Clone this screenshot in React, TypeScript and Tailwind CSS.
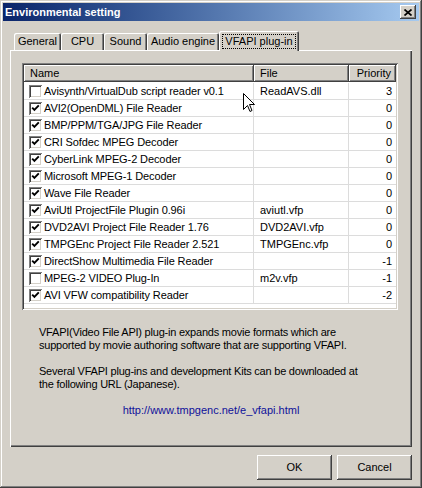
import React from 'react';

// --- Data ---
type Plugin = { name: string; file: string; priority: number; enabled: boolean };

const PLUGINS: Plugin[] = [
  { name: 'Avisynth/VirtualDub script reader v0.1', file: 'ReadAVS.dll', priority: 3, enabled: false },
  { name: 'AVI2(OpenDML) File Reader', file: '', priority: 0, enabled: true },
  { name: 'BMP/PPM/TGA/JPG File Reader', file: '', priority: 0, enabled: true },
  { name: 'CRI Sofdec MPEG Decoder', file: '', priority: 0, enabled: true },
  { name: 'CyberLink MPEG-2 Decoder', file: '', priority: 0, enabled: true },
  { name: 'Microsoft MPEG-1 Decoder', file: '', priority: 0, enabled: true },
  { name: 'Wave File Reader', file: '', priority: 0, enabled: true },
  { name: 'AviUtl ProjectFile Plugin 0.96i', file: 'aviutl.vfp', priority: 0, enabled: true },
  { name: 'DVD2AVI Project File Reader 1.76', file: 'DVD2AVI.vfp', priority: 0, enabled: true },
  { name: 'TMPGEnc Project File Reader 2.521', file: 'TMPGEnc.vfp', priority: 0, enabled: true },
  { name: 'DirectShow Multimedia File Reader', file: '', priority: -1, enabled: true },
  { name: 'MPEG-2 VIDEO Plug-In', file: 'm2v.vfp', priority: -1, enabled: false },
  { name: 'AVI VFW compatibility Reader', file: '', priority: -2, enabled: true },
];

const TABS = [
  { label: 'General', w: 'w-[47px]' },
  { label: 'CPU', w: 'w-[43px]' },
  { label: 'Sound', w: 'w-[43px]' },
  { label: 'Audio engine', w: 'w-[72px]' },
];

// classic win2k bevels
const raised = 'shadow-[inset_-1px_-1px_0_#404040,inset_1px_1px_0_#ffffff,inset_-2px_-2px_0_#808080]';
const sunken = 'shadow-[inset_1px_1px_0_#808080,inset_-1px_-1px_0_#ffffff,inset_2px_2px_0_#404040,inset_-2px_-2px_0_#d4d0c8]';

const CheckBox = ({ checked }: { checked: boolean }) => (
  <div className={`w-[13px] h-[13px] bg-white flex items-center justify-center shrink-0 ${sunken}`}>
    {checked && (
      <svg width="9" height="9" viewBox="0 0 9 9">
        <path d="M1.2 3.6 L3.4 5.9 L7.8 1.4" fill="none" stroke="#000" strokeWidth="1.9" />
      </svg>
    )}
  </div>
);

const Button = ({ label }: { label: string }) => (
  <button className={`w-[75px] h-[25px] bg-[#d4d0c8] text-[11px] text-black ${raised}`}>{label}</button>
);

export default function App() {
  return (
    <div className="w-[422px] h-[488px] bg-[#d4d0c8] p-[3px] flex flex-col relative font-['Liberation_Sans',Arial,sans-serif] text-black shadow-[inset_-1px_-1px_0_#404040,inset_1px_1px_0_#d4d0c8,inset_-2px_-2px_0_#808080,inset_2px_2px_0_#ffffff]">
      {/* Title bar */}
      <div className="h-[18px] bg-linear-to-r from-[#0a246a] to-[#a6caf0] flex items-center justify-between pl-[2px] pr-[3px]">
        <span className="text-white font-bold text-[11px] leading-none">Environmental setting</span>
        <div className={`w-[16px] h-[14px] bg-[#d4d0c8] flex items-center justify-center ${raised}`}>
          <svg width="8" height="7" viewBox="0 0 8 7">
            <path d="M0.5 0.5 L7.5 6.5 M7.5 0.5 L0.5 6.5" stroke="#000" strokeWidth="1.7" />
          </svg>
        </div>
      </div>

      <div className="flex flex-col px-[7px] mt-[10px]">
        {/* Tabs */}
        <div className="h-[19px] flex items-end pl-[4px]">
          {TABS.map(t => (
            <div
              key={t.label}
              className={`${t.w} h-[17px] flex items-center justify-center text-[11px] rounded-t-[2px] shadow-[inset_1px_1px_0_#ffffff,inset_-1px_0_0_#404040,inset_-2px_0_0_#808080]`}
            >
              {t.label}
            </div>
          ))}
          <div className="w-[80px] h-[20px] mb-[-1px] relative z-10 bg-[#d4d0c8] flex items-center justify-center text-[11px] rounded-t-[2px] shadow-[inset_1px_1px_0_#ffffff,inset_-1px_0_0_#404040,inset_-2px_0_0_#808080]">
            <span className="border border-dotted border-black px-[2px] leading-[13px]">VFAPI plug-in</span>
          </div>
        </div>

        {/* Panel */}
        <div className="h-[397px] bg-[#d4d0c8] flex flex-col pt-[13px] shadow-[inset_1px_1px_0_#ffffff,inset_-1px_-1px_0_#404040,inset_-2px_-2px_0_#808080]">
          {/* List */}
          <div className={`ml-[12px] w-[376px] h-[247px] bg-white p-[2px] flex flex-col ${sunken}`}>
            <div className="flex h-[17px] text-[11px]">
              <div className={`w-[230px] bg-[#d4d0c8] flex items-center pl-[6px] ${raised}`}>Name</div>
              <div className={`w-[95px] bg-[#d4d0c8] flex items-center pl-[6px] ${raised}`}>File</div>
              <div className={`w-[47px] bg-[#d4d0c8] flex items-center justify-end pr-[5px] ${raised}`}>Priority</div>
            </div>
            <div className="flex flex-col pt-[1px]">
              {PLUGINS.map(p => (
                <div key={p.name} className="flex h-[17px] text-[11px] border-b border-[#dcdcdc]">
                  <div className="w-[230px] flex items-center pl-[5px] gap-[2px] border-r border-[#dcdcdc] whitespace-nowrap overflow-hidden">
                    <CheckBox checked={p.enabled} />
                    <span className="tracking-[-0.1px]">{p.name}</span>
                  </div>
                  <div className="w-[95px] flex items-center pl-[6px] border-r border-[#dcdcdc]">{p.file}</div>
                  <div className="w-[47px] flex items-center justify-end pr-[4px]">{p.priority}</div>
                </div>
              ))}
            </div>
          </div>

          {/* Description */}
          <div className="pl-[29px] mt-[16px] text-[11px] leading-[13px] tracking-[-0.22px] flex flex-col gap-[13px]">
            <p>
              VFAPI(Video File API) plug-in expands movie formats which are
              <br />
              supported by movie authoring software that are supporting VFAPI.
            </p>
            <p>
              Several VFAPI plug-ins and development Kits can be downloaded at
              <br />
              the following URL (Japanese).
            </p>
          </div>
          <div className="mt-[13px] text-center text-[11px] leading-[13px] text-[#10109a]">
            http://www.tmpgenc.net/e_vfapi.html
          </div>
        </div>

        {/* Buttons */}
        <div className="flex justify-end gap-[5px] mt-[8px]">
          <Button label="OK" />
          <Button label="Cancel" />
        </div>
      </div>

      {/* Mouse pointer */}
      <svg className="absolute left-[243px] top-[93px]" width="12" height="20" viewBox="0 0 12 20">
        <path d="M0.5 0.5 L0.5 16.5 L4.5 12.5 L7 18.5 L9 17.5 L6.5 11.5 L11.5 11.5 Z" fill="#fff" stroke="#000" strokeWidth="1" />
      </svg>
    </div>
  );
}
